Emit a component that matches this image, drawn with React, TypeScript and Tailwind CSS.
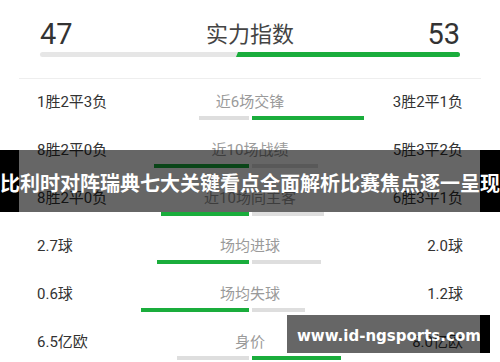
const GREEN = "bg-[#1aad3c]";
const GRAY = "bg-[#dedede]";

type Row = {
  left: string;
  label: string;
  right: string;
  lw: number;
  lGreen: boolean;
  rw: number;
  rGreen: boolean;
};

const rows: Row[] = [
  { left: "1胜2平3负", label: "近6场交锋", right: "3胜2平1负", lw: 50, lGreen: false, rw: 112, rGreen: true },
  { left: "8胜2平0负", label: "近10场战绩", right: "5胜3平2负", lw: 95, lGreen: true, rw: 66, rGreen: false },
  { left: "8胜2平0负", label: "近10场同主客", right: "6胜3平1负", lw: 88, lGreen: true, rw: 72, rGreen: false },
  { left: "2.7球", label: "场均进球", right: "2.0球", lw: 92, lGreen: true, rw: 69, rGreen: false },
  { left: "0.6球", label: "场均失球", right: "1.2球", lw: 108, lGreen: true, rw: 53, rGreen: false },
  { left: "6.5亿欧", label: "身价", right: "8.0亿欧", lw: 72, lGreen: false, rw: 89, rGreen: true },
];

const font = "font-['Roboto','Noto_Sans_CJK_SC',sans-serif]";

export default function App() {
  return (
    <div className={`relative w-[500px] h-[362px] overflow-hidden bg-white ${font}`}>
      <div className="px-[19px]">
        {/* 实力指数 header */}
        <div className="px-[21px] pt-[18px] pb-[21px] border-b border-[#eeeeee]">
          <div className="flex items-end justify-between h-[32px]">
            <span className="text-[29px] leading-[32px] text-[#333333]">47</span>
            <span className="text-[22px] leading-[28px] text-[#444444] pb-[1px]">实力指数</span>
            <span className="text-[29px] leading-[32px] text-[#333333]">53</span>
          </div>
          <div className="mt-[2px] flex h-[5px] rounded-full overflow-hidden bg-[#e6e6e6]">
            <div className={`ml-auto w-[224px] h-full ${GREEN} [clip-path:polygon(2px_0,100%_0,100%_100%,0_100%)]`} />
          </div>
        </div>

        {rows.map((r, i) => (
          <div key={i} className="h-[48px] pt-[14px]">
            <div className="flex items-center justify-between px-[18px] h-[18px] text-[15px] leading-[18px]">
              <span className="w-[110px] text-[#333333]">{r.left}</span>
              <span className="text-[#9a9a9a]">{r.label}</span>
              <span className="w-[110px] text-right text-[#333333]">{r.right}</span>
            </div>
            <div className="mt-[5px] flex justify-center gap-[3px]">
              <div className="w-[200px] flex justify-end">
                <div className={`h-[4px] ${r.lGreen ? GREEN : GRAY}`} style={{ width: r.lw }} />
              </div>
              <div className="w-[200px] flex">
                <div className={`h-[4px] ${r.rGreen ? GREEN : GRAY}`} style={{ width: r.rw }} />
              </div>
            </div>
          </div>
        ))}
      </div>

      {/* title band overlay */}
      <div className="absolute left-0 right-0 top-[150px] h-[62px] flex">
        <div className="w-[19px] bg-black" />
        <div className="flex-1 bg-black/60" />
        <div className="w-[20px] bg-black" />
        <div className="absolute inset-0 flex items-center justify-center pt-[6px]">
          <span className="whitespace-nowrap text-white font-bold text-[20px] leading-[24px] tracking-[0px]">
            比利时对阵瑞典七大关键看点全面解析比赛焦点逐一呈现
          </span>
        </div>
      </div>

      {/* watermark */}
      <div className="absolute left-[287px] top-[315px] h-[38px] flex">
        <div className="w-[193px] bg-black/60 flex items-center pl-[10px] pt-[4px]">
          <span className="whitespace-nowrap text-white font-bold text-[15px] font-['DejaVu_Sans',sans-serif]">
            www.id-ngsports.com
          </span>
        </div>
        <div className="w-[10px] bg-black" />
      </div>
    </div>
  );
}
